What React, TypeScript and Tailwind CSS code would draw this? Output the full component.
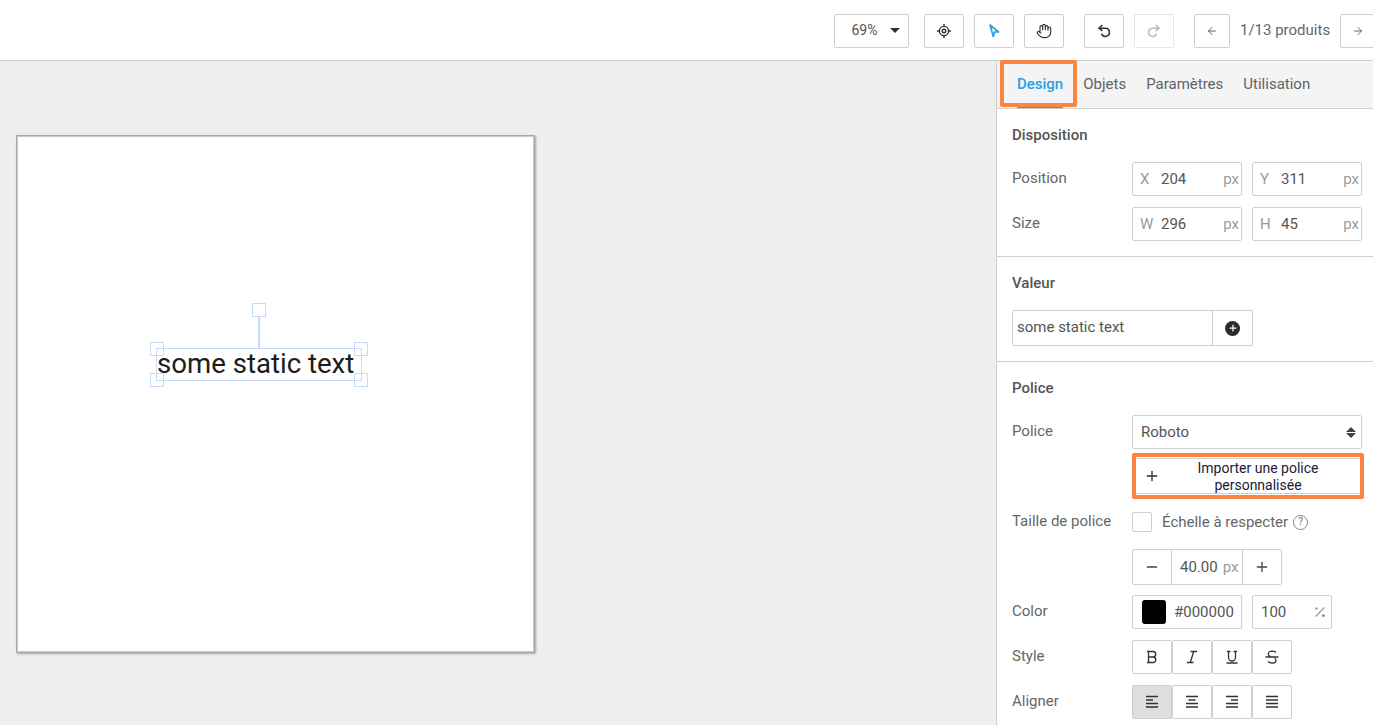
import type { ReactNode } from 'react';
import { ArrowLeft, ArrowRight, Hand, Minus, Plus } from 'lucide-react';

function ToolButton({
  children,
  className = '',
}: {
  children: ReactNode;
  className?: string;
}) {
  return (
    <button
      className={`flex h-[34px] shrink-0 items-center justify-center rounded-[2px] border border-[#cfcfcf] bg-white ${className}`}
    >
      {children}
    </button>
  );
}

function Glyph({ d, color = '#333', width = 1.3 }: { d: string; color?: string; width?: number }) {
  return (
    <svg width="16" height="16" viewBox="0 0 16 16" fill="none" stroke={color} strokeWidth={width}>
      <path d={d} />
    </svg>
  );
}

function TargetIcon() {
  return (
    <svg width="16" height="16" viewBox="0 0 16 16" fill="none" stroke="#333" strokeWidth="1.4">
      <circle cx="8" cy="8" r="4.6" />
      <circle cx="8" cy="8" r="1.8" />
      <path d="M8 1v2.4M8 12.6V15M1 8h2.4M12.6 8H15" />
    </svg>
  );
}

function PointerIcon() {
  return (
    <svg width="14" height="16" viewBox="0 0 14 16" fill="none" stroke="#2b9fe0" strokeWidth="1.7">
      <path d="M3 2l8.5 7H7.5l-1.2 4.5z" strokeLinejoin="round" />
    </svg>
  );
}

function UndoIcon({ color = '#333', flip = false }: { color?: string; flip?: boolean }) {
  return (
    <svg
      width="16"
      height="16"
      viewBox="0 0 16 16"
      fill="none"
      stroke={color}
      strokeWidth="1.6"
      className={flip ? '-scale-x-100' : ''}
    >
      <path d="M3.5 5.2h6a4.1 4.1 0 1 1-4 5.6" />
      <path d="M6.4 2L3 5.2l3.4 2.6" />
    </svg>
  );
}

function HelpIcon() {
  return (
    <span className="ml-[5px] flex h-[15px] w-[15px] items-center justify-center rounded-full border-[1.5px] border-[#888] text-[10px] leading-none font-medium text-[#888]">
      ?
    </span>
  );
}

function PercentIcon() {
  return (
    <svg width="12" height="12" viewBox="0 0 12 12" fill="#999" stroke="#999">
      <circle cx="2.5" cy="2.5" r="1.2" stroke="none" />
      <circle cx="9.5" cy="9.5" r="1.6" stroke="none" />
      <path d="M10.5 1.5L1.5 10.5" strokeWidth="1.3" />
    </svg>
  );
}

function Handle({ className }: { className: string }) {
  return (
    <div
      className={`absolute h-[14px] w-[14px] border-[1.5px] border-[#c9daf9] ${className}`}
    />
  );
}

function SectionTitle({ children }: { children: ReactNode }) {
  return (
    <h3 className="h-[20px] text-[15px] leading-[20px] font-medium text-[#555]">
      {children}
    </h3>
  );
}

function RowLabel({ children }: { children: ReactNode }) {
  return (
    <div className="w-[120px] shrink-0 pb-[2px] text-[15px] leading-[20px] text-[#666]">
      {children}
    </div>
  );
}

function NumField({ axis, value }: { axis: string; value: string }) {
  return (
    <div className="flex h-[34px] w-[110px] items-center rounded-[2px] border border-[#cfcfcf] bg-white text-[15px]">
      <span className="ml-[7px] w-[21px] text-[#9a9a9a]">{axis}</span>
      <span className="text-[#555]">{value}</span>
      <span className="mr-[2px] ml-auto text-[#9a9a9a]">px</span>
    </div>
  );
}

function IconGroup({ icons, active }: { icons: ReactNode[]; active?: number }) {
  return (
    <div className="flex">
      {icons.map((icon, i) => (
        <div
          key={i}
          className={`flex h-[34px] w-[40px] items-center justify-center rounded-[2px] border border-[#cfcfcf] ${
            active === i ? 'border-[#b5b5b5] bg-[#dedede]' : 'bg-white'
          }`}
        >
          {icon}
        </div>
      ))}
    </div>
  );
}

const styleIcons = [
  'M3 2.5h6a2.7 2.7 0 0 1 0 5.5H4.5M4.5 8h5a2.8 2.8 0 0 1 0 5.5H3M4.5 2.5v11',
  'M6.5 2.5h6.5M3 13.5h6.5M9.7 2.5L6.3 13.5',
  'M3 2.5h3.5M9.5 2.5H13M4.5 2.5v6a3.5 3.5 0 0 0 7 0v-6M2.5 14h11',
  'M12 3.5c-1-1-2.2-1.3-4-1.3-2.2 0-3.8 1-3.8 2.7 0 1.3.8 2 2.3 2.6M1.5 8h13M10.5 9.2c1 .6 1.5 1.2 1.5 2.2 0 1.6-1.6 2.6-3.8 2.6-1.7 0-3-.4-4.2-1.4',
];

const alignIcons = [
  'M2 2.5h12M2 6h7M2 9.5h12M2 13h12',
  'M2 2.5h12M4.5 6h7M2 9.5h12M2 13h12',
  'M2 2.5h12M7 6h7M2 9.5h12M2 13h12',
  'M2 2.5h12M2 6h12M2 9.5h12M2 13h12',
];

export default function App() {
  return (
    <div className="flex h-[725px] w-[1373px] flex-col overflow-hidden bg-white font-['Roboto',sans-serif]">
      <header className="flex h-[61px] shrink-0 items-center overflow-hidden border-b border-[#cfcfcf] bg-white pt-[1px]">
        <div className="ml-[834px] flex items-center">
          <ToolButton className="w-[75px] text-[14px] text-[#555]">
            <span className="mr-[12px] ml-[8px]">69%</span>
            <span className="h-0 w-0 border-x-[5px] border-t-[5px] border-x-transparent border-t-[#333]" />
          </ToolButton>
          <ToolButton className="ml-[15px] w-[40px]">
            <TargetIcon />
          </ToolButton>
          <ToolButton className="ml-[10px] w-[40px]">
            <PointerIcon />
          </ToolButton>
          <ToolButton className="ml-[10px] w-[40px]">
            <Hand size={16} strokeWidth={1.7} color="#333" />
          </ToolButton>
          <ToolButton className="ml-[20px] w-[40px]">
            <UndoIcon />
          </ToolButton>
          <ToolButton className="ml-[10px] w-[40px] border-[#e6e6e6]">
            <UndoIcon color="#bdbdbd" flip />
          </ToolButton>
          <ToolButton className="ml-[20px] w-[36px]">
            <ArrowLeft size={12} strokeWidth={1.8} color="#555" />
          </ToolButton>
          <span className="ml-[10px] w-[100px] shrink-0 text-[15px] whitespace-nowrap text-[#666]">
            1/13 produits
          </span>
          <ToolButton className="w-[36px]">
            <ArrowRight size={12} strokeWidth={1.8} color="#555" />
          </ToolButton>
        </div>
      </header>

      <div className="flex min-h-0 flex-1">
        <main className="w-[996px] shrink-0 bg-[#eeeeee] pt-[74px] pl-[16px]">
          <div className="relative h-[518px] w-[519px] border border-[#a9a9a9] bg-white shadow-[inset_0_0_0_1px_#c8c8c8,1px_1px_2px_rgba(0,0,0,0.3)]">
            <div className="absolute top-[212px] left-[139px] flex h-[33px] w-[206px] items-center border border-[#c9daf9] pb-[2px] text-[27.6px] whitespace-nowrap text-[#1c1c1c]">
              some static text
            </div>
            <div className="absolute top-[181px] left-[241px] h-[32px] w-[2px] bg-[#c9daf9]" />
            <Handle className="top-[167px] left-[235px]" />
            <Handle className="top-[206px] left-[133px]" />
            <Handle className="top-[206px] left-[337px]" />
            <Handle className="top-[237px] left-[133px]" />
            <Handle className="top-[237px] left-[337px]" />
          </div>
        </main>

        <aside className="relative w-[377px] shrink-0 border-l border-[#cfcfcf]">
          <nav className="flex h-[48px] items-end border-b border-[#cfcfcf] bg-[#f4f4f4] pl-[20px] text-[15px] text-[#5f6368]">
            <div className="h-[47px] border-b-[2px] border-[#2b9fe0] pt-[12px] font-medium text-[#2b9fe0]">
              Design
            </div>
            <div className="ml-[20px] h-[47px] pt-[12px]">Objets</div>
            <div className="ml-[20px] h-[47px] pt-[12px]">Paramètres</div>
            <div className="ml-[20px] h-[47px] pt-[12px]">Utilisation</div>
          </nav>
          <div className="absolute top-[-1px] left-[3px] h-[47px] w-[77px] rounded-[2px] border-[4px] border-[#fc843f]" />

          <section className="h-[148px] border-b border-[#cfcfcf] pt-[16px] pl-[15px]">
            <SectionTitle>Disposition</SectionTitle>
            <div className="mt-[17px] flex items-center">
              <RowLabel>Position</RowLabel>
              <div className="flex gap-[10px]">
                <NumField axis="X" value="204" />
                <NumField axis="Y" value="311" />
              </div>
            </div>
            <div className="mt-[11px] flex items-center">
              <RowLabel>Size</RowLabel>
              <div className="flex gap-[10px]">
                <NumField axis="W" value="296" />
                <NumField axis="H" value="45" />
              </div>
            </div>
          </section>

          <section className="h-[105px] border-b border-[#cfcfcf] pt-[16px] pl-[15px]">
            <SectionTitle>Valeur</SectionTitle>
            <div className="mt-[17px] flex h-[36px] w-[241px] rounded-[2px] border border-[#cfcfcf] text-[15px] text-[#555]">
              <div className="flex flex-1 items-center pb-[2px] pl-[4px]">
                some static text
              </div>
              <div className="flex w-[40px] items-center justify-center border-l border-[#cfcfcf]">
                <div className="flex h-[15px] w-[15px] items-center justify-center rounded-full bg-[#2b2b2b]">
                  <Plus size={10} strokeWidth={3} color="#fff" />
                </div>
              </div>
            </div>
          </section>

          <section className="pt-[16px] pl-[15px]">
            <SectionTitle>Police</SectionTitle>
            <div className="mt-[17px] flex items-start">
              <div className="pt-[6px]">
                <RowLabel>Police</RowLabel>
              </div>
              <div>
                <div className="flex h-[34px] w-[230px] items-center justify-between rounded-[2px] border border-[#cfcfcf] pr-[5px] pl-[8px] text-[15px] text-[#555]">
                  Roboto
                  <div className="flex flex-col gap-[1px]">
                    <span className="h-0 w-0 border-x-[5px] border-b-[5px] border-x-transparent border-b-[#444]" />
                    <span className="h-0 w-0 border-x-[5px] border-t-[5px] border-x-transparent border-t-[#444]" />
                  </div>
                </div>
                <div className="mt-[4px] flex h-[46px] w-[232px] rounded-[2px] border-[4px] border-[#fc843f] bg-white py-[1px]">
                  <button className="flex flex-1 items-center border-y border-[#cfcfcf] bg-white pl-[8px] text-[14px] leading-[17px] text-[#1a1a3a]">
                    <Plus size={16} strokeWidth={2} color="#333" className="shrink-0" />
                    <span className="flex-1 pt-[2px] pr-[11px] pl-[7px] text-center">
                      Importer une police personnalisée
                    </span>
                  </button>
                </div>
              </div>
            </div>

            <div className="mt-[13px] flex items-start">
              <div className="-mt-[1px]">
                <RowLabel>Taille de police</RowLabel>
              </div>
              <div>
                <div className="flex h-[20px] items-center text-[15px] text-[#666]">
                  <div className="h-[20px] w-[20px] rounded-[2px] border border-[#cfcfcf]" />
                  <span className="ml-[10px]">Échelle à respecter</span>
                  <HelpIcon />
                </div>
                <div className="mt-[17px] flex h-[36px] w-[150px] rounded-[2px] border border-[#cfcfcf] text-[15px]">
                  <div className="flex w-[38px] items-center justify-center">
                    <Minus size={16} strokeWidth={2} color="#444" />
                  </div>
                  <div className="flex w-[72px] items-center border-x border-[#cfcfcf] pl-[8px]">
                    <span className="text-[#555]">40.00</span>
                    <span className="ml-[5px] text-[#9a9a9a]">px</span>
                  </div>
                  <div className="flex flex-1 items-center justify-center">
                    <Plus size={16} strokeWidth={2} color="#444" />
                  </div>
                </div>
              </div>
            </div>

            <div className="mt-[10px] flex items-center">
              <RowLabel>Color</RowLabel>
              <div className="flex h-[34px] w-[110px] items-center rounded-[2px] border border-[#cfcfcf] pl-[9px] text-[15px] text-[#555]">
                <div className="h-[24px] w-[24px] rounded-[3px] bg-black" />
                <span className="ml-[8px]">#000000</span>
              </div>
              <div className="ml-[10px] flex h-[34px] w-[80px] items-center justify-between rounded-[2px] border border-[#cfcfcf] pr-[5px] pl-[8px] text-[15px] text-[#555]">
                100
                <PercentIcon />
              </div>
            </div>

            <div className="mt-[11px] flex items-center">
              <RowLabel>Style</RowLabel>
              <IconGroup icons={styleIcons.map((d) => <Glyph key={d} d={d} />)} />
            </div>

            <div className="mt-[11px] flex items-center">
              <RowLabel>Aligner</RowLabel>
              <IconGroup
                active={0}
                icons={alignIcons.map((d) => <Glyph key={d} d={d} width={1.6} />)}
              />
            </div>
          </section>
        </aside>
      </div>
    </div>
  );
}
